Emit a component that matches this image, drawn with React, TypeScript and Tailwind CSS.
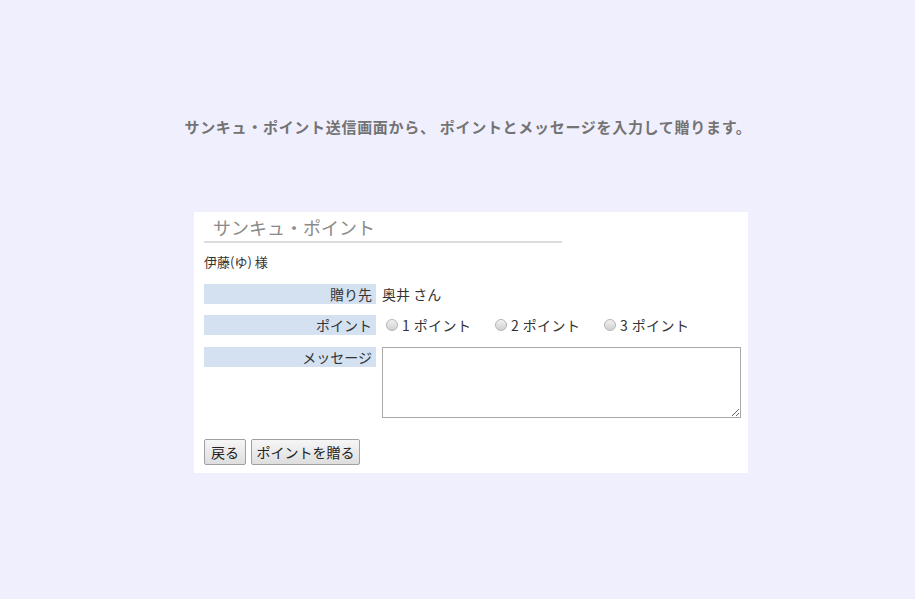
import React from "react";

const font = { fontFamily: '"Noto Sans CJK JP", "Noto Sans", sans-serif' };

function Radio({ label }: { label: string }) {
  return (
    <label className="flex items-center w-[109px] shrink-0">
      <span className="w-[12px] h-[12px] rounded-full border border-[#b5b5b5] bg-gradient-to-b from-[#f2f2f2] to-[#cfcfcf] mr-[4px] shrink-0" />
      <span className="tracking-[0.4px]">{label}</span>
    </label>
  );
}

export default function App() {
  return (
    <div
      className="min-h-[599px] w-full bg-[#f0effd] text-[#333] text-[14px] flex flex-col"
      style={font}
    >
      <h1 className="pt-[116px] h-[212px] text-center text-[15px] leading-[22px] font-semibold text-[#737373] pl-[21px] tracking-[0.7px]">
        サンキュ・ポイント送信画面から、 ポイントとメッセージを入力して贈ります。
      </h1>
      <div className="ml-[194px] w-[554px] h-[261px] bg-white px-[10px] pt-[2px]">
        <div className="w-[358px] border-b-2 border-[#dcdcdc] pl-[9px] h-[29px] text-[18px] leading-[26px] text-[#8a8a8a]">
          サンキュ・ポイント
        </div>
        <div className="mt-[9px] h-[20px] leading-[20px] text-[13px]">伊藤(ゆ) 様</div>
        <div className="mt-[12px] flex items-start h-[20px]">
          <div className="w-[172px] shrink-0 h-[20px] bg-[#d3e1f0] text-right pr-[4px] leading-[20px]">贈り先</div>
          <div className="pl-[6px] leading-[20px]">奥井 さん</div>
        </div>
        <div className="mt-[11px] flex items-start h-[20px]">
          <div className="w-[172px] shrink-0 h-[20px] bg-[#d3e1f0] text-right pr-[4px] leading-[20px]">ポイント</div>
          <div className="pl-[10px] leading-[20px] flex items-center h-[20px]">
            <Radio label="1 ポイント" />
            <Radio label="2 ポイント" />
            <Radio label="3 ポイント" />
          </div>
        </div>
        <div className="mt-[12px] flex items-start">
          <div className="w-[172px] shrink-0 h-[20px] bg-[#d3e1f0] text-right pr-[4px] leading-[20px]">メッセージ</div>
          <textarea
            className="ml-[6px] shrink-0 w-[359px] h-[71px] border border-[#a9a9a9] bg-white resize"
            style={font}
          />
        </div>
        <div className="mt-[21px] flex gap-[5px]">
          <button className="w-[42px] h-[26px] border border-[#a0a0a0] rounded-[2px] bg-gradient-to-b from-[#f6f6f6] to-[#dedede] text-[14px] text-[#222]">
            戻る
          </button>
          <button className="w-[109px] h-[26px] border border-[#a0a0a0] rounded-[2px] bg-gradient-to-b from-[#f6f6f6] to-[#dedede] text-[14px] text-[#222]">
            ポイントを贈る
          </button>
        </div>
      </div>
    </div>
  );
}
